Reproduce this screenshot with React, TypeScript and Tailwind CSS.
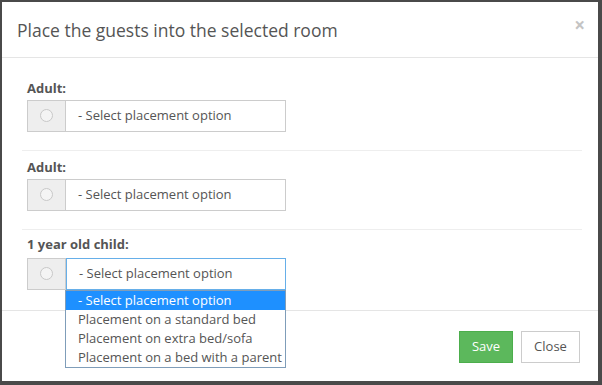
const options = [
  "- Select placement option",
  "Placement on a standard bed",
  "Placement on extra bed/sofa",
  "Placement on a bed with a parent",
];

function Radio() {
  return (
    <span className="block w-[13px] h-[13px] rounded-full border border-[#c8c8c8] bg-[#f4f4f4]" />
  );
}

function PlacementRow({ focused = false }: { focused?: boolean }) {
  return (
    <div className="flex w-[259px] h-[32px]">
      <div className="w-[39px] flex justify-center pt-[8px] bg-[#eeeeee] border border-[#cccccc]">
        <Radio />
      </div>
      <div
        className={
          focused
            ? "flex-1 flex items-center pl-[12px] border border-[#66afe9] bg-white"
            : "flex-1 flex items-center pl-[12px] border border-l-0 border-[#cccccc] bg-white"
        }
      >
        <span className="text-[13px] text-[#555555]">- Select placement option</span>
      </div>
    </div>
  );
}

export default function App() {
  return (
    <div className="w-[602px] h-[385px] bg-[#4a4a4a] p-[2px] pb-[4px] pr-[4px]" style={{ fontFamily: '"Open Sans", sans-serif' }}>
      <div className="h-full bg-white flex flex-col">
        {/* header */}
        <div className="h-[56px] border-b border-[#e5e5e5] flex items-center justify-between pl-[15px] pr-[13px]">
          <h4 className="text-[17.5px] text-[#555555] pt-[1px]">Place the guests into the selected room</h4>
          <span className="text-[19px] leading-none text-[#c4c4c4] font-bold -mt-[8px]">×</span>
        </div>

        {/* body */}
        <div className="flex-1 pl-[20px] pr-[16px] pt-[20px]">
          <div className="px-[5px]">
            <div className="text-[13px] font-bold text-[#555555] leading-[20px] mb-[2px]">Adult:</div>
            <PlacementRow />
          </div>
          <div className="border-t border-[#eeeeee] mt-[18px]" />
          <div className="px-[5px] pt-[6px]">
            <div className="text-[13px] font-bold text-[#555555] leading-[20px] mb-[2px]">Adult:</div>
            <PlacementRow />
          </div>
          <div className="border-t border-[#eeeeee] mt-[18px]" />
          <div className="px-[5px] pt-[4px]">
            <div className="text-[13px] font-bold text-[#555555] leading-[20px] mb-[4px]">1 year old child:</div>
            <div className="relative">
              <PlacementRow focused />
              <div className="absolute left-[38px] top-[32px] w-[221px] border border-[#7f9db9] bg-white z-10">
                {options.map((o, i) => (
                  <div
                    key={o}
                    className={
                      i === 0
                        ? "h-[19px] leading-[19px] pl-[12px] text-[13px] bg-[#1e90ff] text-white"
                        : "h-[19px] leading-[19px] pl-[12px] text-[13px] text-[#555555]"
                    }
                  >
                    {o}
                  </div>
                ))}
              </div>
            </div>
          </div>
        </div>

        {/* footer */}
        <div className="h-[71px] border-t border-[#e5e5e5] flex justify-end items-start gap-[8px] pt-[20px] pr-[18px]">
          <button className="h-[32px] w-[54px] bg-[#5cb85c] border border-[#4cae4c] text-white text-[13px]">Save</button>
          <button className="h-[32px] w-[59px] bg-white border border-[#cccccc] text-[#555555] text-[13px]">Close</button>
        </div>
      </div>
    </div>
  );
}
